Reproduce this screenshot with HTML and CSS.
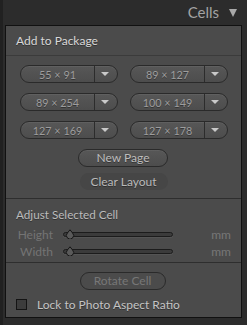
FILE: index.html
```html
<!DOCTYPE html>
<html lang="en">
<head>
<title>Cells</title>
<meta charset="utf-8">
<meta name="viewport" content="width=device-width, initial-scale=1">
<link rel="stylesheet" href="styles.css">
</head>
<body>

<div class="topbar">
  <span class="topbar_title">Cells</span>
  <span class="topbar_arrow"></span>
</div>

<div class="panel">
  <div class="panel_head">Add to Package</div>

  <div class="section sizes">
    <div class="grid">
      <div class="drop"><span class="drop_text">55 × 91</span><span class="drop_btn"><i class="tri"></i></span></div>
      <div class="drop"><span class="drop_text">89 × 127</span><span class="drop_btn"><i class="tri"></i></span></div>
      <div class="drop"><span class="drop_text">89 × 254</span><span class="drop_btn"><i class="tri"></i></span></div>
      <div class="drop"><span class="drop_text">100 × 149</span><span class="drop_btn"><i class="tri"></i></span></div>
      <div class="drop"><span class="drop_text">127 × 169</span><span class="drop_btn"><i class="tri"></i></span></div>
      <div class="drop"><span class="drop_text">127 × 178</span><span class="drop_btn"><i class="tri"></i></span></div>
    </div>
    <button class="pill new_page">New Page</button>
    <button class="pill flat">Clear Layout</button>
  </div>

  <div class="section adjust">
    <div class="sub_head">Adjust Selected Cell</div>
    <div class="slider_row">
      <span class="slider_label">Height</span>
      <span class="track">
        <svg class="thumb" width="12" height="10" viewBox="0 0 12 10"><path d="M6 0.8 L8.6 4 A3.6 3.6 0 1 1 3.4 4 Z" fill="#5a5a5a" stroke="#151515" stroke-width="1"/></svg>
      </span>
      <span class="unit">mm</span>
    </div>
    <div class="slider_row">
      <span class="slider_label">Width</span>
      <span class="track">
        <svg class="thumb" width="12" height="10" viewBox="0 0 12 10"><path d="M6 0.8 L8.6 4 A3.6 3.6 0 1 1 3.4 4 Z" fill="#5a5a5a" stroke="#151515" stroke-width="1"/></svg>
      </span>
      <span class="unit">mm</span>
    </div>
  </div>

  <div class="section rotate">
    <button class="pill rotate_btn">Rotate Cell</button>
    <label class="check_row"><span class="check"></span>Lock to Photo Aspect Ratio</label>
  </div>
</div>

</body>
</html>
```

FILE: styles.css
```css
* {
  box-sizing: border-box;
}

body {
  margin: 0;
  width: 247px;
  height: 325px;
  background-color: #2c2c2c;
  border-left: 3px solid #212121;
  font-family: Lato, "Open Sans", sans-serif;
  overflow: hidden;
}

/* Panel title bar */
.topbar {
  height: 25px;
  display: flex;
  align-items: center;
  justify-content: flex-end;
  padding-right: 10px;
  gap: 10px;
}

.topbar_title {
  color: #a3a3a3;
  font-size: 15px;
  line-height: 1;
}

.topbar_arrow {
  width: 0;
  height: 0;
  border-left: 4px solid transparent;
  border-right: 4px solid transparent;
  border-top: 8px solid #a9a9a9;
  margin-top: 1px;
}

/* Main box */
.panel {
  margin-left: 2px;
  width: 237px;
  height: 293px;
  background-color: #4b4b4b;
  border: 1px solid #111;
  color: #c8c8c8;
  text-shadow: 0 1px 0 rgba(0, 0, 0, 0.35);
}

.panel_head {
  height: 30px;
  padding-left: 10px;
  display: flex;
  align-items: center;
  font-size: 12px;
  color: #d8d8d8;
  border-bottom: 1px solid #3b3b3b;
}

.section {
  display: flex;
  flex-direction: column;
  align-items: center;
}

.sizes {
  padding: 9px 0 0;
  height: 143px;
  border-bottom: 1px solid #2e2e2e;
}

.grid {
  width: 208px;
  margin-left: 1px;
  display: grid;
  grid-template-columns: 98px 98px;
  column-gap: 12px;
  row-gap: 10px;
  margin-bottom: 10px;
}

.drop {
  height: 18px;
  display: flex;
  border: 1px solid #2a2a2a;
  border-radius: 9px;
  background: linear-gradient(#575757, #4d4d4d);
  box-shadow: inset 0 1px 0 rgba(255, 255, 255, 0.06);
}

.drop_text {
  flex: 1;
  display: flex;
  align-items: center;
  justify-content: center;
  font-size: 10.8px;
  color: #9d9d9d;
  border-right: 1px solid #2c2c2c;
}

.drop_btn {
  width: 22px;
  display: flex;
  align-items: center;
  justify-content: center;
  padding-right: 2px;
}

.tri {
  width: 0;
  height: 0;
  border-left: 4px solid transparent;
  border-right: 4px solid transparent;
  border-top: 4px solid #c9c9c9;
}

/* Buttons */
.pill {
  font-family: inherit;
  font-size: 12px;
  color: #bdbdbd;
  text-shadow: 0 1px 0 rgba(0, 0, 0, 0.35);
  height: 18px;
  padding: 0;
  border: 1px solid #2a2a2a;
  border-radius: 9px;
  background: linear-gradient(#575757, #4d4d4d);
  box-shadow: inset 0 1px 0 rgba(255, 255, 255, 0.06);
  line-height: 1;
}

.new_page {
  width: 90px;
  margin-left: -1px;
}

.flat {
  width: 88px;
  height: 17px;
  margin-top: 6px;
  border-color: transparent;
  background: #464646;
  box-shadow: none;
  color: #b9b9b9;
}

.adjust {
  height: 64px;
  align-items: stretch;
  padding-top: 7px;
  border-bottom: 1px solid #2e2e2e;
}

.sub_head {
  font-size: 11.7px;
  color: #bcbcbc;
  padding-left: 10px;
  height: 17px;
  line-height: 17px;
  margin-bottom: 3px;
}

.slider_row {
  height: 17px;
  display: flex;
  align-items: center;
}

.slider_label {
  width: 47px;
  text-align: right;
  font-size: 12px;
  color: #747474;
  text-shadow: none;
}

.track {
  position: relative;
  margin-left: 10px;
  width: 110px;
  height: 5px;
  border: 1px solid #1c1c1c;
  border-radius: 3px;
  background: #3b3b3b;
  box-shadow: 0 1px 0 rgba(255, 255, 255, 0.05);
}

.thumb {
  position: absolute;
  left: 0;
  top: -4px;
}

.unit {
  margin-left: auto;
  margin-right: 10px;
  font-size: 12px;
  color: #777;
  text-shadow: none;
}

.rotate {
  padding-top: 9px;
}

.rotate_btn {
  width: 86px;
  margin-left: -2px;
  color: #777;
  background: #4b4b4b;
  box-shadow: none;
  text-shadow: none;
}

.check_row {
  align-self: flex-start;
  margin-top: 7px;
  padding-left: 10px;
  display: flex;
  align-items: center;
  gap: 10px;
  font-size: 12px;
  color: #c4c4c4;
}

.check {
  width: 11px;
  height: 11px;
  border: 1px solid #141414;
  background: #3c3c3c;
}
```
